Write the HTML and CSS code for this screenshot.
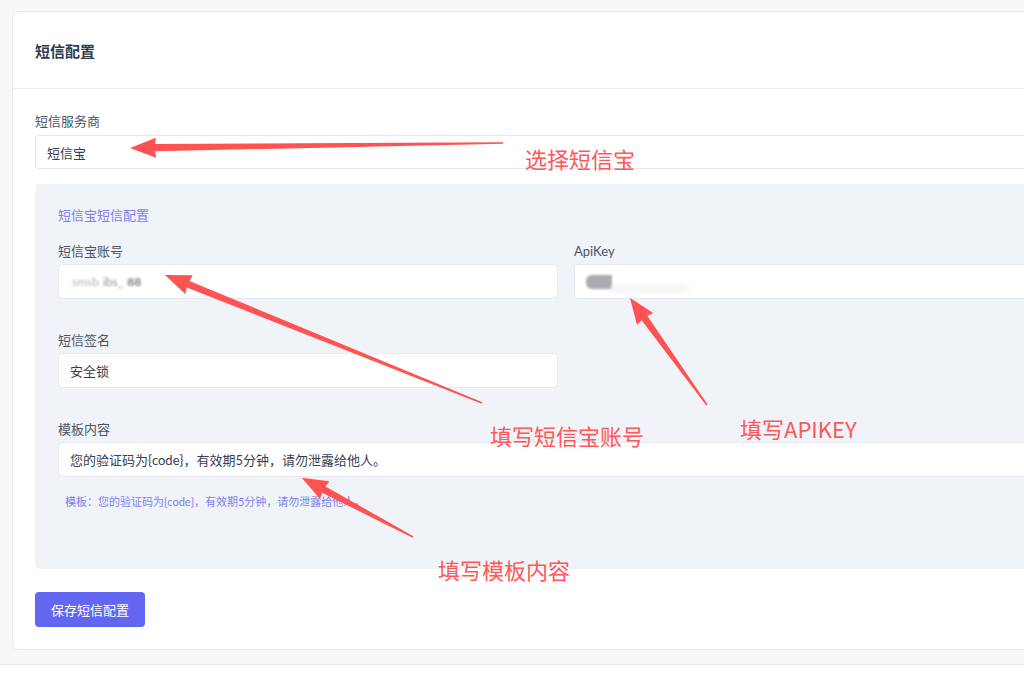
FILE: index.html
```html
<!DOCTYPE html>
<html lang="zh-CN">
<head>
<meta charset="utf-8">
<title>短信配置</title>
<link rel="stylesheet" href="styles.css">
</head>
<body>
<div class="page">
  <div class="card">
    <div class="card-header"><h2 class="card-title">短信配置</h2></div>
    <div class="card-body">
      <div class="field">
        <label class="label">短信服务商</label>
        <div class="select">短信宝</div>
      </div>
      <div class="panel">
        <div class="panel-title">短信宝短信配置</div>
        <div class="grid">
          <div class="field">
            <label class="label">短信宝账号</label>
            <div class="input"><span class="blur-text">smsb<b>ibs_</b><i>88</i></span></div>
          </div>
          <div class="field">
            <label class="label">ApiKey</label>
            <div class="input"><span class="blur-box"></span><span class="blur-faint"></span></div>
          </div>
          <div class="field">
            <label class="label">短信签名</label>
            <div class="input">安全锁</div>
          </div>
          <div></div>
          <div class="field wide">
            <label class="label">模板内容</label>
            <div class="input">您的验证码为{code}，有效期5分钟，请勿泄露给他人。</div>
            <p class="hint">模板：您的验证码为{code}，有效期5分钟，请勿泄露给他人。</p>
          </div>
        </div>
      </div>
      <button class="btn">保存短信配置</button>
    </div>
  </div>
</div>
<div class="overlay">
  <svg class="arrows" width="1024" height="679" viewBox="0 0 1024 679">
    <g fill="#ff5252">
      <polygon transform="translate(503 143) rotate(179.23)" points="0,-0.8 348,-3.6 347,-10 373,0 347,10 348,3.6 0,0.8"/>
      <polygon transform="translate(482 403) rotate(-158)" points="0,-0.8 317,-3.6 316,-10 342,0 316,10 317,3.6 0,0.8"/>
      <polygon transform="translate(707 405) rotate(-125.74)" points="0,-0.8 107,-3.6 106,-10 132,0 106,10 107,3.6 0,0.8"/>
      <polygon transform="translate(413 537) rotate(-152)" points="0,-0.8 101,-3.6 100,-10 126,0 100,10 101,3.6 0,0.8"/>
    </g>
  </svg>
  <span class="note note-1">选择短信宝</span>
  <span class="note note-2">填写短信宝账号</span>
  <span class="note note-3">填写APIKEY</span>
  <span class="note note-4">填写模板内容</span>
</div>
</body>
</html>
```
FILE: styles.css
```css
html, body {
  margin: 0;
  padding: 0;
  overflow: hidden;
  background: #ffffff;
}
body {
  font-family: Lato, "Noto Sans CJK SC", sans-serif;
  color: #374151;
  width: 1024px;
  height: 679px;
  position: relative;
}
.page {
  background: #f7f8fa;
  padding: 11px 0 14px 12px;
  border-bottom: 1px solid #e6e9ee;
  width: 1200px;
}
.card {
  background: #fff;
  border: 1px solid #e6e9ef;
  border-radius: 6px;
  width: 1120px;
}
.card-header {
  height: 76px;
  display: flex;
  align-items: center;
  padding: 0 22px;
  border-bottom: 1px solid #e8ebf0;
}
.card-title {
  margin: 0;
  font-size: 15px;
  font-weight: 700;
  color: #2f3a4c;
}
.card-body {
  padding: 23px 22px 22px;
}
.field {
  display: flex;
  flex-direction: column;
}
.label {
  font-size: 13px;
  line-height: 18px;
  color: #4b5563;
  margin-bottom: 5px;
}
.select {
  height: 32px;
  border: 1px solid #e5e8ee;
  border-radius: 4px;
  display: flex;
  align-items: center;
  padding: 0 11px;
  font-size: 13px;
  color: #374151;
}
.panel {
  margin-top: 15px;
  background: #f0f3f8;
  border-radius: 5px;
  padding: 22px 23px 59px;
}
.panel-title {
  font-size: 13px;
  line-height: 18px;
  color: #7b7ff3;
  margin-bottom: 18px;
}
.grid {
  display: grid;
  grid-template-columns: 500px 1fr;
  column-gap: 16px;
  row-gap: 32px;
}
.grid .label {
  margin-bottom: 4px;
}
.wide {
  grid-column: 1 / -1;
}
.input {
  height: 33px;
  background: #fff;
  border: 1px solid #e6e9f0;
  border-radius: 5px;
  display: flex;
  align-items: center;
  padding: 0 11px;
  font-size: 13px;
  color: #374151;
}
.blur-text {
  color: #b0b3ba;
  filter: blur(1.2px);
  font-size: 12px;
  padding-left: 2px;
}
.blur-text b {
  font-weight: 400;
  color: #8d9098;
  margin: 0 4px;
}
.blur-text i {
  font-style: normal;
  color: #7d8088;
  font-weight: 700;
}
.blur-box {
  width: 26px;
  height: 14px;
  background: #a9abb0;
  border-radius: 6px 0 0 6px;
  filter: blur(1.2px);
}
.blur-faint {
  width: 76px;
  height: 8px;
  background: #f5f6f8;
  filter: blur(2px);
  margin-top: 14px;
}
.hint {
  margin: 17px 0 0 7px;
  font-size: 11px;
  line-height: 16px;
  color: #7b7ff3;
}
.btn {
  margin-top: 23px;
  width: 110px;
  height: 35px;
  background: #6366f1;
  color: #fff;
  border: none;
  border-radius: 4px;
  font-family: Lato, "Noto Sans CJK SC", sans-serif;
  font-size: 13px;
  display: block;
}
.overlay {
  position: absolute;
  left: 0;
  top: 0;
  width: 1024px;
  height: 679px;
  pointer-events: none;
}
.arrows {
  position: absolute;
  left: 0;
  top: 0;
}
.note {
  position: absolute;
  font-family: "Noto Sans CJK SC", sans-serif;
  font-size: 22px;
  line-height: 26px;
  color: #ff5757;
  white-space: nowrap;
}
.note-1 { left: 525px; top: 145px; }
.note-2 { left: 490px; top: 422px; }
.note-3 { left: 740px; top: 415px; }
.note-4 { left: 438px; top: 556px; }
```
